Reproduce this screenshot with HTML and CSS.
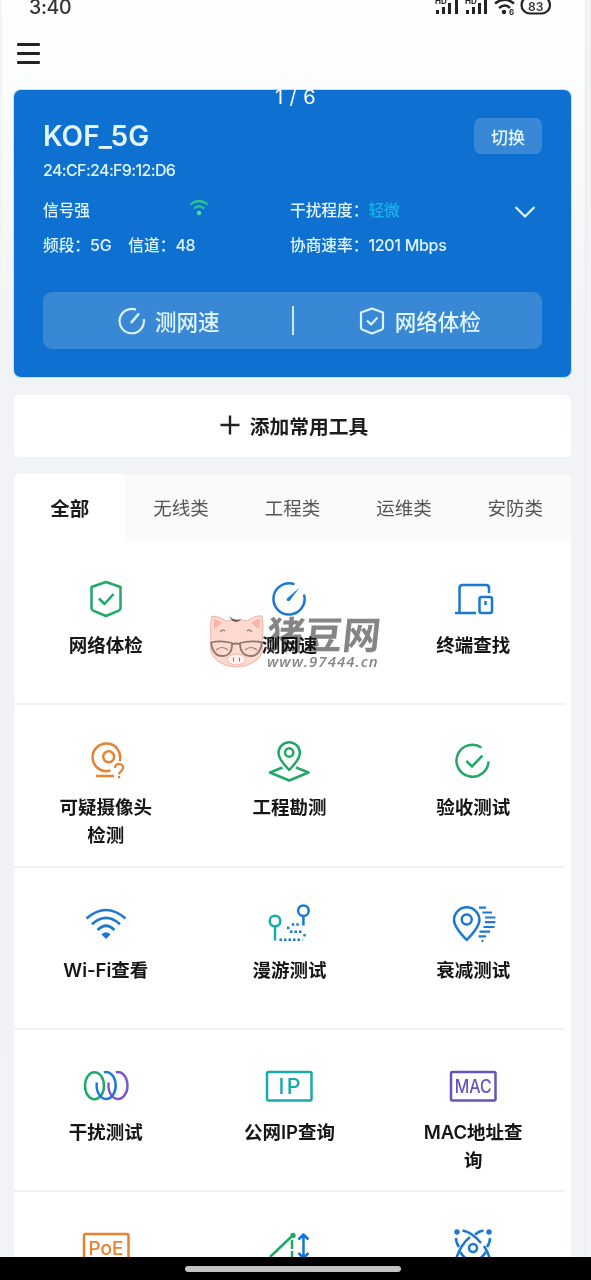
FILE: index.html
```html
<!DOCTYPE html>
<html lang="zh-CN">
<head>
<meta charset="utf-8">
<title>网络工具</title>
<link rel="stylesheet" href="styles.css">
</head>
<body>
<div class="screen">
  <header class="status">
    <span class="clock">3:40</span>
    <svg class="status-icons" width="118" height="18" viewBox="0 0 118 18">
      <g fill="#222">
        <path d="M1 10h3v4H1zM7 7h3v7H7zM13 3h3v11h-3zM20 0h3v14h-3zM31 10h3v4h-3zM37 7h3v7h-3zM43 3h3v11h-3zM49 0h3v14h-3z"/>
        <circle cx="69" cy="12" r="2.2"/>
      </g>
      <g fill="none" stroke="#222" stroke-width="2.4">
        <path d="M60 3.5Q70-4 79 3.5M64 8Q70 3 75 8"/>
        <rect x="86.500" y="-3.500" width="28.500" height="17" rx="8.500" stroke-width="2.200"/>
      </g>
      <text x="0" y="4" class="tiny">HD</text><text x="30" y="4" class="tiny">HD</text>
      <text x="74" y="15" class="tiny">6</text><text x="93" y="10.500" class="battery">83</text>
    </svg>
  </header>
  <nav class="topbar"><div class="menu"><i></i><i></i><i></i></div></nav>

  <main class="content">
    <section class="wifi-card">
      <div class="head">
        <div>
          <h1 class="ssid">KOF_5G</h1>
          <p class="mac">24:CF:24:F9:12:D6</p>
        </div>
        <button class="switch">切换</button>
      </div>
      <div class="info">
        <div class="cell">信号强
          <svg class="signal" width="20" height="18" viewBox="0 0 20 18" fill="none" stroke="#2dc48d" stroke-width="2.200"><path d="M1.500 5.500Q10-1.500 18.500 5.500M5 9.500Q10 5 15 9.500"/><circle cx="10" cy="14" r="2.200" fill="#4fe0a0" stroke="none"/></svg>
        </div>
        <div class="cell">干扰程度：<span class="mild">轻微</span></div>
        <div class="cell">频段：<span class="lat">5G</span><span class="chan">信道：<span class="lat">48</span></span></div>
        <div class="cell">协商速率：<span class="lat">1201 Mbps</span></div>
        <svg class="chevron" width="22" height="14" viewBox="0 0 22 14" fill="none" stroke="#dff4ff" stroke-width="2.200"><path d="M1.500 2L11 11.500 20.500 2"/></svg>
      </div>
      <div class="actions">
        <div class="action">
          <svg width="28" height="28" viewBox="0 0 28 28" fill="none" stroke="#d9f3ff" stroke-width="2.200"><path d="M18 2.600A12.200 12.200 0 1 0 25.800 12"/><path d="M13 16l8-9.500" stroke-width="2.600"/></svg>
          <span>测网速</span>
        </div>
        <i class="bar"></i>
        <div class="action">
          <svg width="28" height="28" viewBox="0 0 28 28" fill="none" stroke="#d9f3ff" stroke-width="2.200" stroke-linejoin="round"><path d="M14 1.500L25 5.500V20.500Q25 22 23.500 22.700L14 26.500 4.500 22.700Q3 22 3 20.500V5.500ZM9 13.500l4 4 6.500-7"/></svg>
          <span>网络体检</span>
        </div>
      </div>
    </section>

    <section class="add">
      <svg width="20" height="20" viewBox="0 0 20 20" stroke="#222" stroke-width="2.400"><path d="M10 .5v19M.5 10h19"/></svg>
      <span>添加常用工具</span>
    </section>

    <section class="tools">
      <div class="tabs">
        <span class="tab on">全部</span><span class="tab">无线类</span><span class="tab">工程类</span><span class="tab">运维类</span><span class="tab">安防类</span>
      </div>
      <div class="grid">
        <div class="tool green">
          <svg class="ico" viewBox="0 0 48 48"><path d="M24 7L38.500 12V33Q38.500 35 36.800 35.700L24 41 11.200 35.700Q9.500 35 9.500 33V12ZM17 23.500l5.500 5.500 9-10"/></svg>
          <p>网络体检</p>
        </div>
        <div class="tool blue">
          <svg class="ico" viewBox="0 0 48 48"><path d="M29.500 9.300A15.600 15.600 0 1 0 39 19.500"/><path d="M34.500 12.500L22 23.500q-1 3 2.500 2.500z" fill="currentColor" stroke="none"/></svg>
          <p>测网速</p>
        </div>
        <div class="tool blue">
          <svg class="ico" viewBox="0 0 48 48"><path d="M6 38H27M10.500 38V13q0-3 3-3H37q3 0 3 3V18"/><rect x="30.500" y="22" width="12.500" height="16" rx="2"/><path d="M36.500 26v4"/></svg>
          <p>终端查找</p>
        </div>

        <div class="tool orange">
          <svg class="ico" viewBox="0 0 48 48"><path d="M37.700 24A13.800 13.800 0 1 0 28.500 33.500M14 39H32"/><circle cx="26.700" cy="19.700" r="5.500"/><path d="M33 31q0-4 4-4t4 4q0 2-2 3.300t-2 3.200M37 39v2.200" stroke-width="2.200"/></svg>
          <p>可疑摄像头<br>检测</p>
        </div>
        <div class="tool green">
          <svg class="ico" viewBox="0 0 48 48"><path d="M24.200 33Q13.500 22 13.500 16a10.700 10.700 0 0 1 21.400 0Q34.900 22 24.200 33Z"/><circle cx="24.200" cy="15.500" r="4.200"/><path d="M17.500 30.500L5 35.500 24.200 43.500 43.500 35.500 31 30.500"/></svg>
          <p>工程勘测</p>
        </div>
        <div class="tool green">
          <svg class="ico" viewBox="0 0 48 48"><path d="M32.500 10.500A16 16 0 1 0 39.500 24.500M17.400 24l5.600 5.500L33.400 18.700"/></svg>
          <p>验收测试</p>
        </div>

        <div class="tool blue">
          <svg class="ico" viewBox="0 0 48 48"><path d="M4.500 18.500Q24 1.500 43.500 18.500M10 24.200Q24 11.500 38 24.200M15.500 30Q24 21.500 32.500 30" stroke-width="2.600"/><path d="M19.500 34.500q4.500-4.500 9 0L24 39z" fill="currentColor" stroke="none"/></svg>
          <p>Wi-Fi查看</p>
        </div>
        <div class="tool blue">
          <svg class="ico" viewBox="0 0 48 48"><g stroke="#18adaa"><circle cx="10" cy="21" r="5.300"/><path d="M10 26.500V40.500"/></g><circle cx="38.400" cy="10.700" r="5.300"/><path d="M38.400 16V25.500"/><path d="M14.500 39.700H37.500M38.300 35.200h2.400M25 31.700H36.500M22 27.900h2.400M26.800 24.500H35.500" stroke-dasharray="2.500 2" stroke-width="2.600"/></svg>
          <p>漫游测试</p>
        </div>
        <div class="tool blue">
          <svg class="ico" viewBox="0 0 48 48"><path d="M17.700 40Q5 27 5 20a12.700 12.700 0 0 1 25.400 0Q30.400 27 17.700 40Z"/><circle cx="17.700" cy="19.500" r="5"/><path d="M30 7.700h7M33.500 12.500H43M36 17.500H46.400M36 22.200H46.400M34.500 27H45.500M30.500 31.700H41M29.500 36.300H37M32.500 40.800h2" stroke-width="2.200"/></svg>
          <p>衰减测试</p>
        </div>

        <div class="tool blue">
          <svg class="ico" viewBox="0 0 48 48"><ellipse cx="12.500" cy="23.700" rx="9.500" ry="13.500" stroke="#1fa866"/><path d="M22 10.400A9.500 13.500 0 1 1 14.900 20.500"/><path d="M33.800 10.400A9.500 13.500 0 1 1 26.700 20.500" stroke="#7658c9"/></svg>
          <p>干扰测试</p>
        </div>
        <div class="tool teal">
          <svg class="ico" viewBox="0 0 48 48"><rect x="2" y="10" width="44.500" height="28.500" rx="1.500"/><text x="24.500" y="31.700" font-size="21.500" textLength="22">IP</text></svg>
          <p>公网IP查询</p>
        </div>
        <div class="tool purple">
          <svg class="ico" viewBox="0 0 48 48"><rect x="2" y="10" width="44.500" height="28.500" rx="1.500"/><text x="24.200" y="30.700" font-size="18" textLength="37" lengthAdjust="spacingAndGlyphs">MAC</text></svg>
          <p>MAC地址查<br>询</p>
        </div>

        <div class="tool orange">
          <svg class="ico" viewBox="0 0 48 48"><rect x="2" y="10" width="44.500" height="28.500" rx="1.500"/><text x="24" y="30.500" font-size="18.500" textLength="35" lengthAdjust="spacingAndGlyphs">PoE</text></svg>
        </div>
        <div class="tool green">
          <svg class="ico" viewBox="0 0 48 48"><path d="M5 33L26 13"/><path d="M27 16V34" stroke-dasharray="9 2"/><circle cx="28" cy="11.500" r="2.700" fill="currentColor" stroke="none"/><path d="M38.500 11V33M33.500 15.500l5-5 5 5M33.500 29l5 5 5-5" stroke="#1474d2"/></svg>
        </div>
        <div class="tool blue">
          <svg class="ico" viewBox="0 0 48 48"><circle cx="8" cy="8" r="2.700" fill="currentColor" stroke="none"/><circle cx="40" cy="8" r="2.700" fill="currentColor" stroke="none"/><circle cx="24" cy="24" r="4"/><path d="M13.500 6.500Q23 8 32 19M34.500 6.500Q30 7 26 10.500M21 13Q12 20 7 35M35 22Q39 28 41 35M7 14Q7 19 10 23M41 14Q41 19 38 23M11 28Q15 34 20 37M37 28Q33 34 28 37"/></svg>
        </div>
      </div>
    </section>
  </main>

  <div class="pager">1 / 6</div>

  <div class="watermark">
    <svg width="56" height="54" viewBox="0 0 56 54">
      <g fill="#fdd9d0" stroke="#f0b3a8" stroke-width="1">
        <path d="M2 27Q1 8 3 2 10 2 17 7 27 4 38 7 46 1 53 2 55 10 53 27 57 41 45 48 37 53 27 53 18 53 10 48-1 41 2 27Z"/>
        <path d="M5 5Q10 6 13 9L5 15ZM51 5Q46 6 42 9L50 15Z" fill="#f8b3ab" stroke="none"/>
        <ellipse cx="27.500" cy="45.500" rx="9" ry="5.500" fill="#fff1ec"/>
      </g>
      <path d="M20 2q6 6 13 3-5 5-10 1.500" fill="#6b5350"/>
      <g fill="none" stroke="#94786d" stroke-width="1.800" stroke-linejoin="round">
        <path d="M2 28.500Q12 26 23 29 23.500 42 13 42 4 42 2 28.500ZM31 29Q42 26 53 28.500 51 42 42 42 31 42 31 29ZM23 30.500q4-2 8 0"/>
        <path d="M7 36q6-5 12 0M36 36q6-5 12 0M11 18q2.500-3 5-1M38 17q2.500-2 5 1M24.500 43.500v4M30.500 43.500v4" stroke-width="1.100"/>
      </g>
    </svg>
    <div class="brand"><b>猪豆网</b><span>www.97444.cn</span></div>
  </div>

  <footer class="homebar"><i></i></footer>
</div>
</body>
</html>
```
FILE: styles.css
```css
* { box-sizing: border-box; }
body { margin: 0; }
h1, p { margin: 0; font-weight: 500; }
.screen {
  position: relative;
  display: flex;
  flex-direction: column;
  width: 591px;
  height: 1280px;
  padding-left: 2px;
  overflow: hidden;
  background: linear-gradient(#fefefe, #fafcfd 90px, #f1f3f6 330px, #f0f3f7);
  box-shadow: inset 2px 0 #f3f4f5, inset -5px 0 #f2f3f5, inset -6px 0 #e9eaed;
  font-family: Inter, "Noto Sans CJK SC", sans-serif;
  color: #1c1c1c;
}
.status {
  display: flex;
  justify-content: space-between;
  flex: none;
  height: 24px;
  padding: 0 38px 0 27px;
}
.clock { font-size: 19.500px; line-height: 24px; margin-top: -5px; color: #333; font-weight: 500; letter-spacing: -.3px; }
.status-icons { overflow: hidden; }
.tiny { font-size: 8px; font-weight: 700; fill: #222; }
.battery { font-size: 12px; font-weight: 600; fill: #333; }
.topbar { flex: none; height: 66px; padding: 19px 15px; }
.menu { display: flex; flex-direction: column; justify-content: space-between; width: 23px; height: 21px; }
.menu i { height: 3px; background: #222; border-radius: 1px; }

.content { flex: none; width: 557px; margin-left: 12px; }
.wifi-card {
  height: 287px;
  padding: 27px 29px 28px;
  border-radius: 7px;
  background: #0e70d0;
  box-shadow: 0 0 0 1px #b9e2fb;
  color: #e2f6ff;
  display: flex;
  flex-direction: column;
}
.head { display: flex; justify-content: space-between; align-items: flex-start; height: 76px; }
.ssid { font-size: 28px; line-height: 38px; font-weight: 600; letter-spacing: 0; }
.mac { font-size: 16px; line-height: 20px; margin-top: 5px; letter-spacing: -.65px; white-space: nowrap; }
.switch {
  width: 68px; height: 36px; margin-top: 1px; padding: 0;
  border: 0; border-radius: 7px;
  background: #3988d5; color: #e6f7ff;
  font: 500 17px "Noto Sans CJK SC", sans-serif;
}
.info {
  position: relative;
  display: grid;
  grid-template-columns: 247px 1fr;
  grid-auto-rows: 34.500px;
  font-size: 15.700px;
  font-weight: 500;
  line-height: 35px;
}
.cell { white-space: nowrap; }
.signal { margin-left: 95px; vertical-align: -1px; }
.mild { color: #16b4e6; }
.chan { margin-left: 17px; }
.lat { font-size: 16px; letter-spacing: -.3px; }
.chevron { position: absolute; right: 6px; top: 12px; }
.actions {
  display: flex;
  align-items: center;
  height: 57px;
  margin-top: auto;
  border-radius: 9px;
  background: #3988d5;
}
.action { display: flex; flex: 1; align-items: center; justify-content: center; gap: 9px; padding-left: 3px; font-size: 21.500px; font-weight: 500; }
.bar { width: 2px; height: 29px; background: #c9edff; }

.add {
  display: flex; align-items: center; justify-content: center; gap: 10px;
  height: 62px; margin-top: 18px; padding: 0 0 2px 3px;
  border-radius: 5px; background: #fff;
  font-size: 19.800px; font-weight: 600;
}
.tools { margin-top: 17px; height: 806px; background: #fff; border-radius: 5px; }
.tabs { display: grid; grid-template-columns: repeat(5, 1fr); height: 67px; background: #f9fafa; border-radius: 5px 5px 0 0; }
.tab { display: flex; align-items: center; justify-content: center; font-size: 18.500px; color: #555; padding-bottom: 1px; }
.tab.on { background: #fff; color: #1c1c1c; font-size: 19.500px; font-weight: 600; border-radius: 5px 5px 0 0; }
.grid { display: grid; grid-template-columns: repeat(3, 1fr); grid-auto-rows: 162.300px; width: 551px; }
.tool {
  display: flex; flex-direction: column; align-items: center; gap: 8px;
  padding-top: 32px;
  border-top: 2px solid #f1f2f4;
}
.tool:nth-child(-n+3) { border-top-color: transparent; }
.tool p { font-size: 18.500px; font-weight: 600; line-height: 28px; text-align: center; color: #161616; white-space: nowrap; }
.ico { flex: none; width: 48px; height: 48px; fill: none; stroke: currentColor; stroke-width: 2.500px; stroke-linejoin: round; }
.ico text { fill: currentColor; stroke: none; text-anchor: middle; font-family: Inter, sans-serif; font-weight: 500; }
.green { color: #1fa866; }
.blue { color: #1b78d3; }
.orange { color: #e88130; }
.teal { color: #1aa9ac; }
.purple { color: #6653bd; }

.pager { position: absolute; left: 0; right: 0; top: 84px; text-align: center; color: #fff; font-size: 20px; line-height: 26px; letter-spacing: .4px; }
.watermark { position: absolute; left: 209px; top: 614px; display: flex; gap: 2px; color: #858585; }
.brand { display: flex; flex-direction: column; mix-blend-mode: multiply; }
.brand b { font: 700 38px/38px "Noto Sans CJK SC", sans-serif; transform: skewX(-6deg); white-space: nowrap; }
.brand span { font: italic 600 15px/18px "Open Sans", sans-serif; letter-spacing: 1.050px; }
.homebar { position: absolute; left: 0; right: 0; bottom: 0; height: 23px; display: flex; justify-content: center; padding: 9px 0 0; background: #000; }
.homebar i { width: 216px; height: 6px; border-radius: 3px; background: #c4c4c4; margin-right: 6px; }
```
